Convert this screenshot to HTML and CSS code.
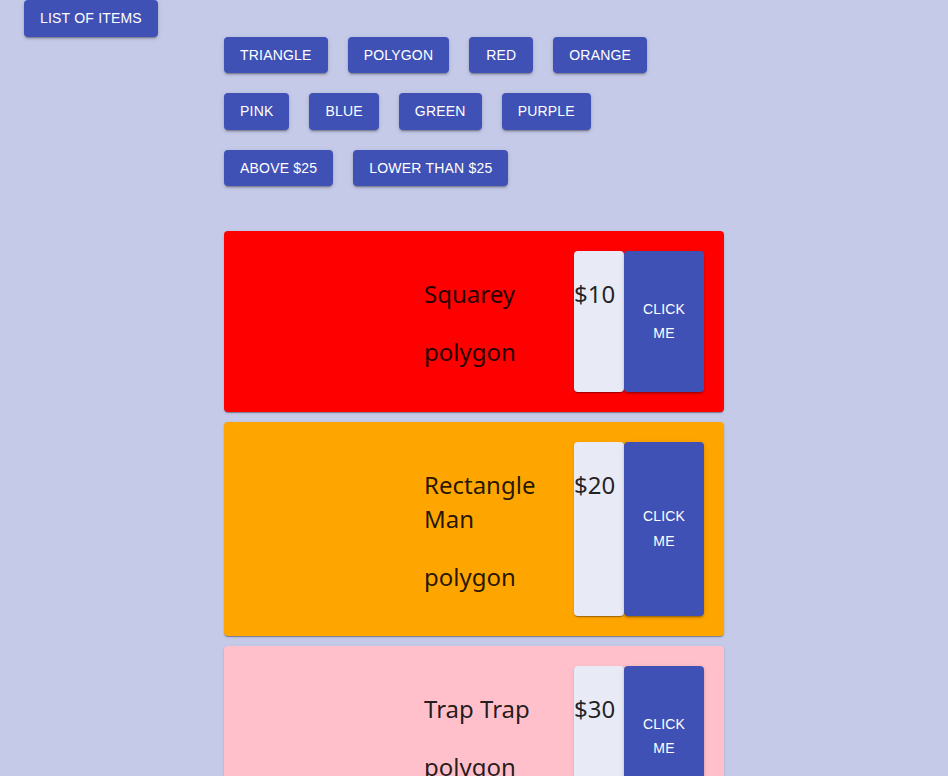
FILE: index.html
```html
<!DOCTYPE html>
<html>
<head>
<meta charset="utf-8">
<link rel="stylesheet" href="styles.css">
</head>
<body>
<div class="topbar">
  <button class="btn">List of items</button>
</div>
<div class="main">
  <div class="filters">
    <div class="row">
      <button class="btn">Triangle</button>
      <button class="btn">Polygon</button>
      <button class="btn">Red</button>
      <button class="btn">Orange</button>
    </div>
    <div class="row">
      <button class="btn">Pink</button>
      <button class="btn">Blue</button>
      <button class="btn">Green</button>
      <button class="btn">Purple</button>
    </div>
    <div class="row">
      <button class="btn">Above $25</button>
      <button class="btn">Lower than $25</button>
    </div>
  </div>
  <div class="cards">
    <div class="card red">
      <div class="thumb"></div>
      <div class="info">
        <p>Squarey</p>
        <p>polygon</p>
      </div>
      <div class="price"><p>$10</p></div>
      <button class="btn buy">Click me</button>
    </div>
    <div class="card orange">
      <div class="thumb"></div>
      <div class="info">
        <p>Rectangle Man</p>
        <p>polygon</p>
      </div>
      <div class="price"><p>$20</p></div>
      <button class="btn buy">Click me</button>
    </div>
    <div class="card pink">
      <div class="thumb"></div>
      <div class="info">
        <p>Trap Trap</p>
        <p>polygon</p>
      </div>
      <div class="price"><p>$30</p></div>
      <button class="btn buy">Click me</button>
    </div>
  </div>
</div>
</body>
</html>
```
FILE: styles.css
```css
html, body {
  margin: 0;
  padding: 0;
  background: #c5cae9;
}
body {
  font-family: "Noto Sans", sans-serif;
  color: rgba(0, 0, 0, 0.87);
}
.btn {
  font-family: "Liberation Sans", Arial, sans-serif;
  font-size: 14px;
  font-weight: 400;
  letter-spacing: 0.2px;
  line-height: 24.5px;
  text-transform: uppercase;
  color: #fff;
  background: #3f51b5;
  border: 0;
  border-radius: 4px;
  padding: 6px 16px;
  min-width: 64px;
  box-shadow: 0px 3px 1px -2px rgba(0,0,0,0.2), 0px 2px 2px 0px rgba(0,0,0,0.14), 0px 1px 5px 0px rgba(0,0,0,0.12);
  cursor: pointer;
  margin: 0;
}
.topbar {
  padding-left: 24px;
  display: flex;
}
.main {
  width: 500px;
  margin: 0 auto;
}
.filters {
  display: flex;
  flex-direction: column;
  gap: 20px;
}
.row {
  display: flex;
  gap: 20px;
}
.cards {
  margin-top: 45px;
  display: flex;
  flex-direction: column;
  gap: 10px;
}
.card {
  display: flex;
  padding: 20px;
  border-radius: 4px;
  box-shadow: 0px 2px 1px -1px rgba(0,0,0,0.2), 0px 1px 1px 0px rgba(0,0,0,0.14), 0px 1px 3px 0px rgba(0,0,0,0.12);
}
.red { background: #ff0000; }
.orange { background: #ffa500; }
.pink { background: #ffc0cb; }
.thumb {
  width: 180px;
  flex: none;
}
.info {
  flex: 1;
  font-size: 24px;
  line-height: 34px;
  padding-top: 2px;
}
.info p, .price p {
  margin: 24px 0;
}
.info p:last-child {
  margin-bottom: 22.5px;
}
.price {
  width: 50px;
  flex: none;
  background: #e8eaf6;
  border-radius: 4px;
  font-size: 24px;
  line-height: 34px;
  padding-top: 2px;
  box-shadow: 0px 2px 1px -1px rgba(0,0,0,0.2), 0px 1px 1px 0px rgba(0,0,0,0.14), 0px 1px 3px 0px rgba(0,0,0,0.12);
}
.buy {
  width: 80px;
  flex: none;
}
```
